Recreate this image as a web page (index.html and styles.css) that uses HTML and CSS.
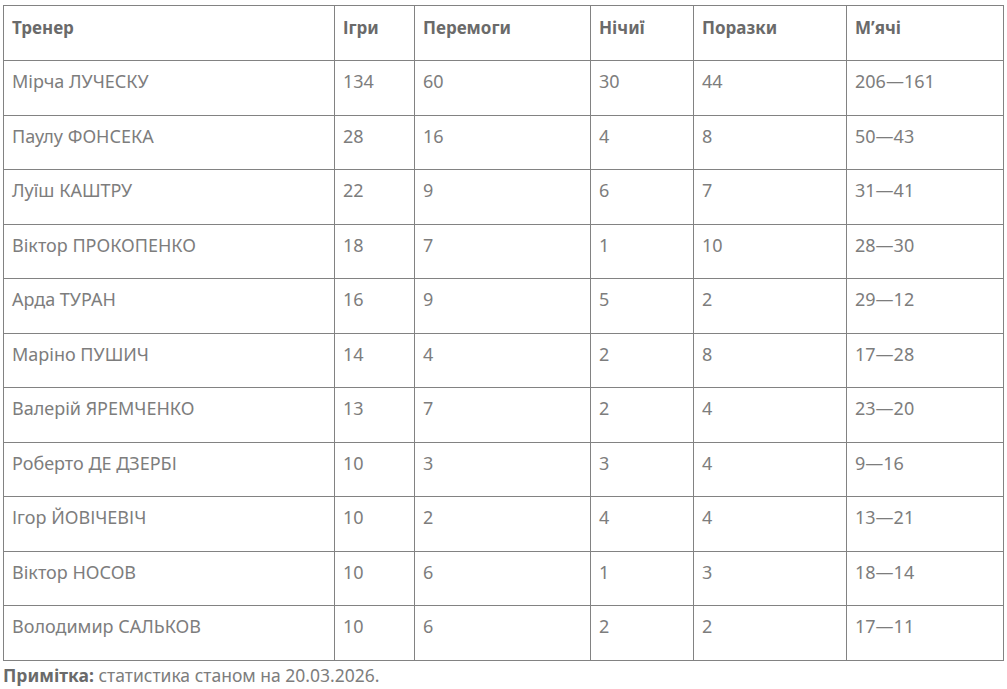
FILE: index.html
```html
<!DOCTYPE html>
<html lang="uk">
<head>
<meta charset="utf-8">
<link rel="stylesheet" href="styles.css">
</head>
<body>
<div class="wrap">
<table class="stats">
<colgroup>
<col class="c-name"><col class="c-games"><col class="c-wins"><col class="c-draws"><col class="c-loss"><col class="c-goals">
</colgroup>
<thead>
<tr><th>Тренер</th><th>Ігри</th><th>Перемоги</th><th>Нічиї</th><th>Поразки</th><th>М’ячі</th></tr>
</thead>
<tbody>
<tr><td>Мірча ЛУЧЕСКУ</td><td>134</td><td>60</td><td>30</td><td>44</td><td>206—161</td></tr>
<tr><td>Паулу ФОНСЕКА</td><td>28</td><td>16</td><td>4</td><td>8</td><td>50—43</td></tr>
<tr><td>Луїш КАШТРУ</td><td>22</td><td>9</td><td>6</td><td>7</td><td>31—41</td></tr>
<tr><td>Віктор ПРОКОПЕНКО</td><td>18</td><td>7</td><td>1</td><td>10</td><td>28—30</td></tr>
<tr><td>Арда ТУРАН</td><td>16</td><td>9</td><td>5</td><td>2</td><td>29—12</td></tr>
<tr><td>Маріно ПУШИЧ</td><td>14</td><td>4</td><td>2</td><td>8</td><td>17—28</td></tr>
<tr><td>Валерій ЯРЕМЧЕНКО</td><td>13</td><td>7</td><td>2</td><td>4</td><td>23—20</td></tr>
<tr><td>Роберто ДЕ ДЗЕРБІ</td><td>10</td><td>3</td><td>3</td><td>4</td><td>9—16</td></tr>
<tr><td>Ігор ЙОВІЧЕВІЧ</td><td>10</td><td>2</td><td>4</td><td>4</td><td>13—21</td></tr>
<tr><td>Віктор НОСОВ</td><td>10</td><td>6</td><td>1</td><td>3</td><td>18—14</td></tr>
<tr><td>Володимир САЛЬКОВ</td><td>10</td><td>6</td><td>2</td><td>2</td><td>17—11</td></tr>
</tbody>
</table>
<p class="note"><b>Примітка:</b> статистика станом на 20.03.2026.</p>
</div>
</body>
</html>
```
FILE: styles.css
```css
html, body {
  margin: 0;
  padding: 0;
  background: #fff;
}
body {
  font-family: "Noto Sans", "Open Sans", sans-serif;
  color: #7d7d7d;
}
.wrap {
  padding: 5px 5px 0 3px;
}
.stats {
  border-collapse: collapse;
  table-layout: fixed;
  width: 1000px;
}
.c-name { width: 331px; }
.c-games { width: 80px; }
.c-wins { width: 176px; }
.c-draws { width: 103px; }
.c-loss { width: 153px; }
.c-goals { width: 157px; }
.stats th, .stats td {
  border: 1px solid #828282;
  text-align: left;
  vertical-align: top;
  padding: 9px 8px 0 8px;
  line-height: 26px;
  white-space: nowrap;
}
.stats th {
  height: 45px;
  font-size: 17px;
  font-weight: 700;
  color: #6a6a6a;
  padding-top: 9px;
}
.stats td {
  height: 46.5px;
  padding-top: 7px;
  font-size: 18px;
}
.note {
  margin: 1px 0 0 0;
  font-size: 17.5px;
  line-height: 26px;
  color: #7d7d7d;
}
.note b {
  color: #6a6a6a;
}
```
